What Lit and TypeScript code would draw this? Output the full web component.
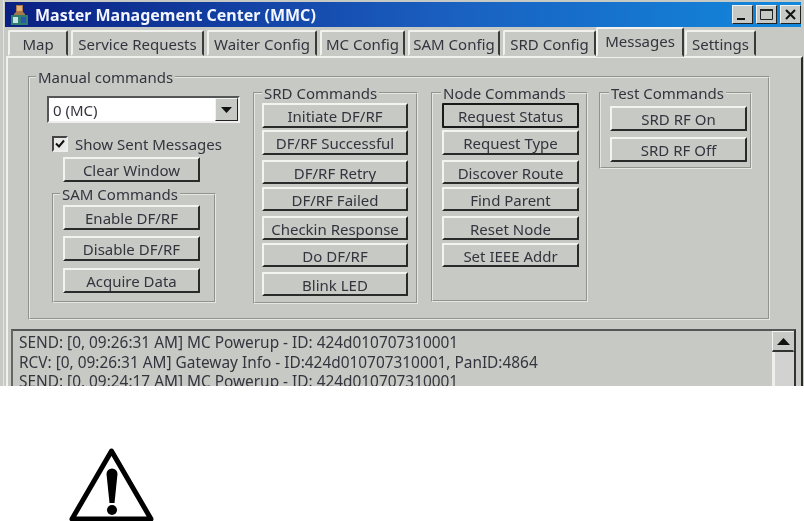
import { LitElement, html, css } from "lit";
import { customElement } from "lit/decorators.js";

const TABS = ["Map", "Service Requests", "Waiter Config", "MC Config", "SAM Config", "SRD Config", "Messages", "Settings"];
const SRD: [string, string][] = [
  ["Initiate DF/RF", "h25 first"], ["DF/RF Successful", "near h25"], ["DF/RF Retry", "far"], ["DF/RF Failed", "mid"],
  ["Checkin Response", "far"], ["Do DF/RF", "mid"], ["Blink LED", "far"],
];
const NODE: [string, string][] = [
  ["Request Status", "h25 first focus"], ["Request Type", "near h25"], ["Discover Route", "far"], ["Find Parent", "mid"],
  ["Reset Node", "far"], ["Set IEEE Addr", "mid"],
];
const LOG = [
  "SEND: [0, 09:26:31 AM] MC Powerup - ID: 424d010707310001",
  "RCV: [0, 09:26:31 AM] Gateway Info - ID:424d010707310001, PanID:4864",
  "SEND: [0, 09:24:17 AM] MC Powerup - ID: 424d010707310001",
];

@customElement("app-root")
export class AppRoot extends LitElement {
  static styles = css`
    :host { display: block; width: 804px; height: 521px; overflow: hidden; background: #fff; }
    .win { height: 386px; box-sizing: border-box; overflow: hidden; background: #c7c9c5; padding: 2px 1px 0 5px;
      box-shadow: inset 3px 0 #c7c9c5, inset 4px 0 #e4e4e0; font: 15px "Noto Sans", sans-serif; color: #34343e; filter: blur(0.35px); }
    .title { height: 25px; display: flex; align-items: center; gap: 6px; padding: 0 1px 0 5px;
      background: linear-gradient(90deg, #0a1f82 0%, #1a5fc0 55%, #1288dc 100%); margin-right: 2px; }
    .title svg { flex: none; }
    .title-text { flex: 1; color: #f4f6ff; font: bold 16px "Noto Sans", sans-serif; white-space: nowrap; }
    .wbtns { display: flex; gap: 3px; margin-right: -1px; }
    .wbtn { width: 21px; height: 19px; box-sizing: border-box; background: #c7c9c5; display: flex; align-items: center; justify-content: center;
      border: 1px solid; border-color: #f2f2f0 #222 #222 #f2f2f0; }
    .tabs { display: grid; grid-template-columns: 60px 133px 110px 85px 92px 90px 86px 71px; column-gap: 3px;
      height: 29px; padding-left: 3px; align-items: end; }
    .tabs .tab:nth-child(6) { margin-right: -3px; }
    .tabs .tab:nth-child(7) { margin-right: -2px; }
    .tab { height: 26px; box-sizing: border-box; display: flex; align-items: center; justify-content: center; white-space: nowrap; padding-top: 1px;
      border: 2px solid; border-color: #f1f1ee #3a3a3a transparent #f1f1ee; border-radius: 2px 2px 0 0; }
    .tab.on { height: 30px; padding: 0 0 2px; border-bottom-color: #c7c9c5; margin-bottom: -1px; z-index: 1; position: relative; background: #c7c9c5; }
    .panel { height: 360px; box-sizing: border-box; margin-left: 1px; padding: 11px 0 0 20px; border-top: 2px solid #f1f1ee; border-left: 2px solid #f1f1ee; border-right: 2px solid #2a2a2a; }
    fieldset { margin: 0; padding: 0; border: 2px groove #e6e6e2; min-width: 0; box-sizing: border-box; }
    legend { padding: 0 2px; line-height: 16px; white-space: nowrap; }
    .manual { width: 742px; height: 251px; display: flex; padding: 0 0 0 17px; }
    .manual > legend { margin-left: -11px; }
    .left { width: 194px; margin-right: 12px; }
    .select { margin-top: 11px; height: 27px; width: 193px; box-sizing: border-box; background: #fff; display: flex; align-items: center;
      border: 2px solid; border-color: #555 #eee #eee #555; padding-left: 4px; position: relative; }
    .select span { flex: 1; }
    .drop { width: 23px; height: 23px; box-sizing: border-box; background: #c7c9c5; display: flex; align-items: center; justify-content: center;
      border: 1px solid; border-color: #f2f2f0 #222 #222 #f2f2f0; }
    .check { display: flex; align-items: center; gap: 7px; margin: 13px 0 0 5px; height: 16px; white-space: nowrap; }
    .box { width: 16px; height: 16px; box-sizing: border-box; background: #e8e8e4; border: 2px solid; border-color: #444 #eee #eee #444;
      display: flex; align-items: center; justify-content: center; flex: none; }
    button { display: block; width: 100%; height: 24px; box-sizing: border-box; padding: 1px 0 0; background: #c7c9c5; font: inherit; color: inherit; white-space: nowrap;
      border: 2px solid; border-color: #f3f3f0 #2a2a2a #2a2a2a #f3f3f0; border-radius: 1px; }
    button.h25 { height: 25px; }
    button.first { margin-top: 2px; }
    button.near { margin-top: 2px; }
    button.mid { margin-top: 3px; }
    button.far { margin-top: 5px; }
    button.focus { border-color: #1a1a1a; }
    .clear { width: 137px; height: 25px; margin: 5px 0 0 16px; }
    .sam { width: 164px; height: 117px; margin: 4px 0 0 5px; padding: 0 0 0 9px; }
    .sam > legend { margin-left: -3px; }
    .sam button { width: 137px; height: 25px; margin-top: 3px; }
    .sam button:nth-of-type(2) { margin-top: 6px; }
    .sam button:nth-of-type(3) { margin-top: 7px; }
    .srd { width: 165px; height: 219px; padding: 0 0 0 7px; }
    .srd button { width: 146px; }
    .node { width: 157px; height: 217px; margin: 0 0 0 13px; padding: 0 0 0 9px; }
    .node > legend, .test > legend { margin-left: -1px; }
    .node button { width: 137px; }
    .test { width: 153px; height: 84px; margin: 0 0 0 11px; padding: 0 0 0 9px; }
    .test button { width: 137px; height: 25px; margin-top: 5px; }
    .test button + button { margin-top: 6px; }
    .log { height: 70px; width: 785px; margin: 9px 0 0 -17px; box-sizing: border-box; display: flex;
      border: 2px solid; border-color: #555 #333 transparent #666; }
    .lines { flex: 1; padding: 2px 0 0 6px; line-height: 19.5px; white-space: nowrap; font-size: 15.4px; }
    .sb { width: 22px; background: #d2d3d0; border-left: 3px solid #eeeeea; box-sizing: border-box; }
    .up { height: 21px; margin-left: -3px; box-sizing: border-box; background: #c7c9c5; display: flex; align-items: center; justify-content: center;
      border: 1px solid; border-color: #f2f2f0 #c7c9c5 #333 #f2f2f0; border-bottom-width: 2px; }
    .warn { padding: 61px 0 0 68px; }
    .warn svg { display: block; }
  `;

  private btn(b: [string, string]) {
    return html`<button class=${b[1]}>${b[0]}</button>`;
  }

  render() {
    return html`
      <div class="win">
        <div class="title">
          <svg width="19" height="22" viewBox="0 0 19 22">
            <path d="M6 1h7v7l2 2v3H4v-3l2-2z" fill="#a8784a"/>
            <rect x="7" y="2" width="5" height="5" fill="#e0b078"/>
            <rect x="1" y="11" width="17" height="10" fill="#2f7f6f"/>
            <rect x="3" y="13" width="5" height="6" fill="#c8e0e8"/>
            <rect x="11" y="13" width="5" height="6" fill="#2a56b0"/>
          </svg>
          <div class="title-text">Master Management Center (MMC)</div>
          <div class="wbtns">
            <div class="wbtn"><svg width="13" height="13"><rect x="1" y="10" width="8" height="2" fill="#111"/></svg></div>
            <div class="wbtn"><svg width="15" height="13"><path d="M1.5 1.5h12v10h-12z" fill="none" stroke="#222" /><rect x="1" y="1" width="13" height="2" fill="#222"/></svg></div>
            <div class="wbtn"><svg width="13" height="13"><path d="M2 2l9 9M11 2l-9 9" stroke="#111" stroke-width="2"/></svg></div>
          </div>
        </div>
        <div class="tabs">
          ${TABS.map((t) => html`<div class="tab ${t === "Messages" ? "on" : ""}">${t}</div>`)}
        </div>
        <div class="panel">
          <fieldset class="manual">
            <legend>Manual commands</legend>
            <div class="left">
              <div class="select"><span>0 (MC)</span>
                <div class="drop"><svg width="11" height="6"><path d="M0 0h11L5.500 6z" fill="#111"/></svg></div>
              </div>
              <div class="check">
                <div class="box"><svg width="12" height="12"><path d="M2 5.500l3 3 5-6" fill="none" stroke="#111" stroke-width="2"/></svg></div>
                <span>Show Sent Messages</span>
              </div>
              <button class="clear">Clear Window</button>
              <fieldset class="sam">
                <legend>SAM Commands</legend>
                <button>Enable DF/RF</button>
                <button>Disable DF/RF</button>
                <button>Acquire Data</button>
              </fieldset>
            </div>
            <fieldset class="srd"><legend>SRD Commands</legend>${SRD.map((b) => this.btn(b))}</fieldset>
            <fieldset class="node"><legend>Node Commands</legend>${NODE.map((b) => this.btn(b))}</fieldset>
            <fieldset class="test"><legend>Test Commands</legend>
              <button>SRD RF On</button>
              <button>SRD RF Off</button>
            </fieldset>
          </fieldset>
          <div class="log">
            <div class="lines">${LOG.map((l) => html`<div>${l}</div>`)}</div>
            <div class="sb">
              <div class="up"><svg width="13" height="7"><path d="M6.500 0l6.500 7H0z" fill="#111"/></svg></div>
            </div>
          </div>
        </div>
      </div>
      <div class="warn">
        <svg width="86" height="74" viewBox="0 0 86 74">
          <path d="M43.500 4L4 72h79z" fill="#fff" stroke="#000" stroke-width="5" stroke-linejoin="round"/>
          <path d="M38.500 27a5.500 5.500 0 0 1 11 0l-3 29h-5z" fill="#000"/>
          <circle cx="44" cy="63" r="5" fill="#000"/>
        </svg>
      </div>
    `;
  }
}
